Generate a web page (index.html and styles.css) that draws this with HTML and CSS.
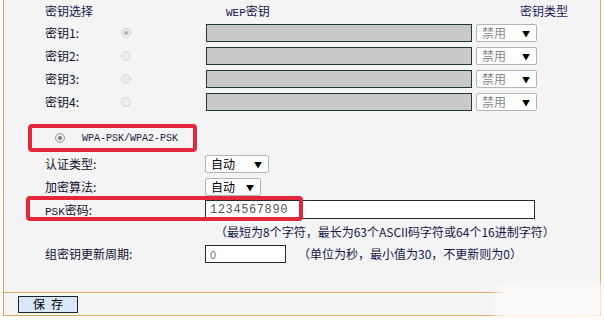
FILE: index.html
```html
<!DOCTYPE html>
<html lang="zh-CN">
<head>
  <meta charset="UTF-8">
  <title>无线安全设置</title>
  <link rel="stylesheet" href="styles.css">
</head>
<body>

<div class="panel">
  <div class="head-row">
    <span class="head-label">密钥选择</span>
    <span class="head-wep"><span class="mono">WEP</span>密钥</span>
    <span class="head-type">密钥类型</span>
  </div>

  <div class="key-row">
    <span class="label">密钥1:</span>
    <span class="radio faint checked"></span>
    <span class="key-input"></span>
    <span class="fake-select off w61">禁用<i>▼</i></span>
  </div>
  <div class="key-row">
    <span class="label">密钥2:</span>
    <span class="radio faint"></span>
    <span class="key-input"></span>
    <span class="fake-select off w61">禁用<i>▼</i></span>
  </div>
  <div class="key-row">
    <span class="label">密钥3:</span>
    <span class="radio faint"></span>
    <span class="key-input"></span>
    <span class="fake-select off w61">禁用<i>▼</i></span>
  </div>
  <div class="key-row">
    <span class="label">密钥4:</span>
    <span class="radio faint"></span>
    <span class="key-input"></span>
    <span class="fake-select off w61">禁用<i>▼</i></span>
  </div>

  <div class="wpa-row">
    <div class="wpa-box">
      <span class="radio checked"></span>
      <span class="wpa-text">WPA-PSK/WPA2-PSK</span>
    </div>
  </div>

  <div class="form-row">
    <span class="form-label">认证类型:</span>
    <span class="fake-select w64">自动<i>▼</i></span>
  </div>
  <div class="form-row">
    <span class="form-label">加密算法:</span>
    <span class="fake-select w56">自动<i>▼</i></span>
  </div>
  <div class="form-row psk-row">
    <span class="form-label"><span class="mono">PSK</span>密码:</span>
    <span class="psk-input">1234567890</span>
    <span class="mark"></span>
  </div>
  <div class="hint-row">（最短为8个字符，最长为63个ASCII码字符或64个16进制字符）</div>
  <div class="form-row">
    <span class="form-label">组密钥更新周期:</span>
    <span class="period-input">0</span>
    <span class="period-hint">（单位为秒，最小值为30，不更新则为0）</span>
  </div>

  <div class="save-bar">
    <button class="save-btn">保存</button>
  </div>
</div>

<div class="blot"></div>

</body>
</html>
```

FILE: styles.css
```css
html, body {
  overflow: hidden;
}

body {
  margin: 0;
  height: 320px;
  background-color: #fff;
  font-family: "Noto Sans CJK SC", "Liberation Sans", sans-serif;
  font-size: 12px;
  color: #10102c;
  position: relative;
}

.mono {
  font-family: "Liberation Mono", monospace;
  font-size: 11px;
}

.panel {
  margin-left: 3px;
  width: 596px;
  height: 315px;
  background-color: #f4f4f4;
  border-left: 1px solid #e3a35c;
  border-right: 1px solid #e3a35c;
  border-bottom: 1px solid #e3a35c;
  display: flex;
  flex-direction: column;
}

.head-row {
  height: 21px;
  display: flex;
  align-items: center;
  padding-left: 41px;
  color: #14144a;
}

.head-label {
  width: 181px;
}

.head-wep {
  width: 294px;
}

.head-type {
  color: #1a1a60;
}

.key-row {
  height: 23px;
  display: flex;
  align-items: center;
  padding-left: 41px;
}

.label {
  width: 76px;
}

.radio {
  width: 10px;
  height: 10px;
  box-sizing: border-box;
  border-radius: 50%;
  border: 1px solid #999;
  background-color: #e8e8e8;
  display: flex;
  align-items: center;
  justify-content: center;
}

.radio.faint {
  border-color: #d6d6d6;
  background-color: #ededed;
  margin-right: 75px;
}

.radio.checked::after {
  content: "";
  width: 4px;
  height: 4px;
  border-radius: 50%;
  background-color: #7a7a7a;
}

.radio.faint.checked::after {
  background-color: #b0b0b0;
}

.key-input {
  width: 266px;
  height: 18px;
  box-sizing: border-box;
  background-color: #c9c9c9;
  border: 1px solid #1e3a30;
  margin-right: 4px;
}

.fake-select {
  height: 18px;
  box-sizing: border-box;
  background-color: #fff;
  border: 1px solid #b4b4b4;
  border-radius: 2px;
  display: flex;
  align-items: center;
  padding-left: 5px;
  color: #000;
  position: relative;
}

.fake-select i {
  font-style: normal;
  font-size: 8px;
  color: #000;
  position: absolute;
  right: 6px;
  top: 4px;
  line-height: 9px;
}

.fake-select.off {
  color: #888;
}

.w61 { width: 61px; }
.w64 { width: 64px; }
.w56 { width: 56px; }

.wpa-row {
  height: 28px;
  margin-top: 11px;
  padding-left: 24px;
  display: flex;
}

.wpa-box {
  width: 169px;
  height: 28px;
  box-sizing: border-box;
  border: 4px solid #e3283a;
  border-radius: 4px;
  display: flex;
  align-items: center;
  padding-left: 23px;
}

.wpa-text {
  font-family: "Liberation Mono", monospace;
  font-size: 10px;
  margin-left: 17px;
  color: #1a1a40;
}

.form-row {
  height: 23px;
  display: flex;
  align-items: center;
  padding-left: 41px;
  position: relative;
}

.form-label {
  width: 160px;
}

.psk-input {
  width: 330px;
  height: 19px;
  box-sizing: border-box;
  background-color: #fff;
  border: 1px solid #1e2e30;
  padding-left: 4px;
  font-family: "Liberation Mono", monospace;
  font-size: 12px;
  letter-spacing: 0.6px;
  color: #555;
  display: flex;
  align-items: center;
}

.mark {
  position: absolute;
  left: 22px;
  top: -2px;
  width: 277px;
  height: 25px;
  box-sizing: border-box;
  border: 4px solid #e3283a;
  border-radius: 4px;
}

.hint-row {
  height: 21px;
  display: flex;
  align-items: center;
  padding-left: 211px;
  color: #14144a;
}

.period-input {
  width: 81px;
  height: 18px;
  box-sizing: border-box;
  background-color: #fff;
  border: 1px solid #1e2e30;
  padding-left: 4px;
  color: #777;
  display: flex;
  align-items: center;
  font-size: 11px;
}

.period-hint {
  margin-left: 12px;
  color: #14144a;
}

.save-bar {
  margin-top: auto;
  height: 22px;
  border-top: 1px solid #e3a35c;
  display: flex;
  align-items: center;
  padding-left: 14px;
}

.save-btn {
  width: 60px;
  height: 17px;
  box-sizing: border-box;
  padding: 0 0 0 6px;
  background-color: #d9e5f8;
  border: 1px solid #222;
  font-family: "Noto Sans CJK SC", sans-serif;
  font-size: 12px;
  letter-spacing: 6px;
  line-height: 14px;
  color: #000;
}

.blot {
  position: absolute;
  left: 494px;
  top: 282px;
  width: 110px;
  height: 38px;
  background-color: #fbf9f7;
  border-radius: 20px 0 0 0;
  filter: blur(4px);
}
```
